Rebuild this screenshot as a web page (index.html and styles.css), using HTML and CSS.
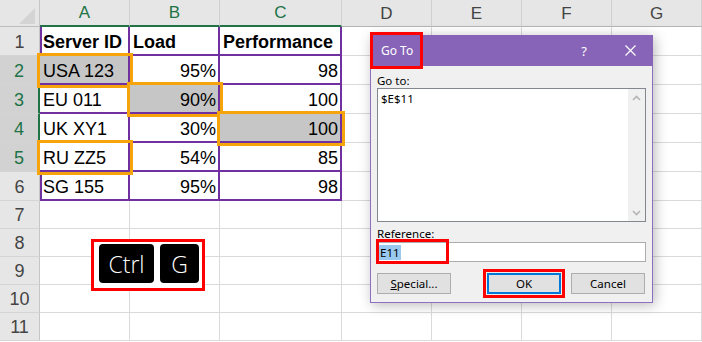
FILE: index.html
```html
<!DOCTYPE html>
<html lang="en">
  <head>
    <meta charset="UTF-8" />
    <meta name="viewport" content="width=device-width, initial-scale=1.0" />
    <title>Go To - Excel</title>
    <link rel="stylesheet" href="styles.css">
  </head>
  <body>
    <div class="sheet">
      <div class="corner">
        <svg width="40" height="27" viewBox="0 0 40 27"><polygon points="19,24 35,24 35,8" fill="#d4d4d4" /></svg>
      </div>
      <div class="col-head sel">A</div>
      <div class="col-head sel">B</div>
      <div class="col-head sel">C</div>
      <div class="col-head">D</div>
      <div class="col-head">E</div>
      <div class="col-head">F</div>
      <div class="col-head">G</div>

      <div class="row-head">1</div>
      <div class="c t first b">Server ID</div>
      <div class="c t b">Load</div>
      <div class="c t b">Performance</div>
      <div class="c"></div><div class="c"></div><div class="c"></div><div class="c"></div>

      <div class="row-head sel">2</div>
      <div class="c t hl pick">USA 123</div>
      <div class="c t num">95%</div>
      <div class="c t num">98</div>
      <div class="c"></div><div class="c"></div><div class="c"></div><div class="c"></div>

      <div class="row-head sel">3</div>
      <div class="c t">EU 011</div>
      <div class="c t num hl pick">90%</div>
      <div class="c t num">100</div>
      <div class="c"></div><div class="c"></div><div class="c"></div><div class="c"></div>

      <div class="row-head sel">4</div>
      <div class="c t">UK XY1</div>
      <div class="c t num">30%</div>
      <div class="c t num hl pick">100</div>
      <div class="c"></div><div class="c"></div><div class="c"></div><div class="c"></div>

      <div class="row-head sel">5</div>
      <div class="c t pick">RU ZZ5</div>
      <div class="c t num">54%</div>
      <div class="c t num">85</div>
      <div class="c"></div><div class="c"></div><div class="c"></div><div class="c"></div>

      <div class="row-head">6</div>
      <div class="c t first">SG 155</div>
      <div class="c t num">95%</div>
      <div class="c t num">98</div>
      <div class="c"></div><div class="c"></div><div class="c"></div><div class="c"></div>

      <div class="row-head">7</div>
      <div class="c"></div><div class="c"></div><div class="c"></div><div class="c"></div><div class="c"></div><div class="c"></div><div class="c"></div>
      <div class="row-head">8</div>
      <div class="c"></div><div class="c"></div><div class="c"></div><div class="c"></div><div class="c"></div><div class="c"></div><div class="c"></div>
      <div class="row-head">9</div>
      <div class="c"></div><div class="c"></div><div class="c"></div><div class="c"></div><div class="c"></div><div class="c"></div><div class="c"></div>
      <div class="row-head">10</div>
      <div class="c"></div><div class="c"></div><div class="c"></div><div class="c"></div><div class="c"></div><div class="c"></div><div class="c"></div>
      <div class="row-head">11</div>
      <div class="c"></div><div class="c"></div><div class="c"></div><div class="c"></div><div class="c"></div><div class="c"></div><div class="c"></div>

      <!-- keyboard shortcut callout -->
      <div class="keys">
        <span class="key wide">Ctrl</span>
        <span class="key">G</span>
      </div>

      <!-- Go To dialog -->
      <div class="dialog">
        <div class="title-bar">
          <span class="title">Go To</span>
          <span class="tb-btn">?</span>
          <span class="tb-btn">
            <svg width="11" height="11" viewBox="0 0 11 11"><path d="M0.5 0.5 L10.5 10.5 M10.5 0.5 L0.5 10.5" stroke="#fff" stroke-width="1.2" /></svg>
          </span>
        </div>
        <div class="dlg-body">
          <div class="label">Go to:</div>
          <div class="list">
            <div class="list-items">$E$11</div>
            <div class="scroll">
              <svg width="9" height="6" viewBox="0 0 9 6"><polyline points="1,5 4.5,1.5 8,5" fill="none" stroke="#b4b4b4" stroke-width="1.6" /></svg>
              <svg width="9" height="6" viewBox="0 0 9 6"><polyline points="1,1 4.5,4.5 8,1" fill="none" stroke="#b4b4b4" stroke-width="1.6" /></svg>
            </div>
          </div>
          <div class="label ref"><u>R</u>eference:</div>
          <div class="ref-input">
            <span class="sel-text">E11</span>
            <span class="mark"></span>
          </div>
          <div class="buttons">
            <button class="btn"><u>S</u>pecial...</button>
            <button class="btn ok">OK</button>
            <button class="btn">Cancel</button>
          </div>
        </div>
      </div>
    </div>
  </body>
</html>
```

FILE: styles.css
```css
* {
  box-sizing: border-box;
}
body {
  margin: 0;
  background: #fff;
  font-family: "Liberation Sans", Arial, sans-serif;
  overflow: hidden;
}
.sheet {
  position: relative;
  display: grid;
  grid-template-columns: 40px 90px 90px 122px 90px 90px 90px 90px;
  grid-template-rows: 27px repeat(6, 29px) repeat(5, 28px);
  width: 702px;
  height: 342px;
}
.corner {
  background: #e6e6e6;
  border-right: 1px solid #c6c6c6;
  border-bottom: 1px solid #bdbdbd;
}
.corner svg {
  display: block;
}
.col-head {
  background: #e6e6e6;
  color: #444;
  font-size: 17px;
  display: flex;
  align-items: center;
  justify-content: center;
  padding-top: 1px;
  border-right: 1px solid #d0d0d0;
  border-bottom: 1px solid #b4b4b4;
}
.col-head.sel {
  color: #217346;
  border-bottom: 2px solid #217346;
}
.row-head {
  background: #e6e6e6;
  color: #444;
  font-size: 18px;
  line-height: 20px;
  display: flex;
  align-items: flex-end;
  justify-content: center;
  padding-bottom: 3px;
  border-right: 1px solid #c6c6c6;
  border-bottom: 1px solid #d4d4d4;
}
.row-head.sel {
  background: #d2d2d2;
  color: #217346;
  border-right: 2px solid #217346;
}
.c {
  font-size: 18px;
  line-height: 20px;
  color: #000;
  display: flex;
  align-items: flex-end;
  padding: 0 2px 3px 3px;
  white-space: nowrap;
  border-right: 1px solid #dadada;
  border-bottom: 1px solid #dadada;
}
.c.t {
  border-right: 2px solid #7030a0;
  border-bottom: 2px solid #7030a0;
  padding-bottom: 2px;
}
.c.first {
  box-shadow: inset 2px 0 0 #7030a0;
}
.b {
  font-weight: bold;
}
.num {
  justify-content: flex-end;
}
.hl {
  background: #c6c6c6;
  background-clip: padding-box;
}
.pick {
  position: relative;
  z-index: 1;
  outline: 3px solid #f5a40c;
  outline-offset: 0;
}

/* Ctrl + G callout */
.keys {
  position: absolute;
  left: 91px;
  top: 239px;
  width: 114px;
  height: 52px;
  border: 3px solid #f00;
  background: #fff;
  display: flex;
  gap: 6px;
  padding: 2px 3px 5px 5px;
  z-index: 2;
}
.key {
  width: 39px;
  height: 39px;
  background: #000;
  border-radius: 4px;
  color: #fff;
  font-family: "Open Sans", sans-serif;
  font-weight: 300;
  font-size: 23px;
  display: flex;
  align-items: center;
  justify-content: center;
}
.key.wide {
  width: 55px;
}

/* dialog */
.dialog {
  position: absolute;
  left: 370px;
  top: 35px;
  width: 283px;
  height: 268px;
  background: #f0f0f0;
  border: 1px solid #8d6fc2;
  box-shadow: 2px 2px 12px rgba(0, 0, 0, 0.28);
  font-family: "Noto Sans", "Open Sans", sans-serif;
  font-size: 11.5px;
  color: #000;
  z-index: 3;
}
.title-bar {
  height: 31px;
  background: #8764b8;
  color: #fff;
  display: flex;
  align-items: center;
  margin: -1px -1px 0 -1px;
}
.title {
  position: relative;
  height: 37px;
  width: 53px;
  margin: -3px 0;
  border: 3px solid #f00;
  padding-left: 8px;
  font-size: 12px;
  display: flex;
  align-items: center;
}
.tb-btn {
  width: 46px;
  height: 31px;
  display: flex;
  align-items: center;
  justify-content: center;
  font-size: 13px;
}
.tb-btn:nth-child(2) {
  margin-left: auto;
}
.dlg-body {
  padding: 0 6px;
}
.label {
  margin-top: 7px;
  line-height: 15px;
  height: 15px;
}
.label.ref {
  margin-top: 4px;
  margin-bottom: 1px;
}
.list {
  height: 134px;
  border: 1px solid #828790;
  background: #fff;
  display: flex;
}
.list-items {
  flex: 1;
  padding: 3px 3px;
  line-height: 14px;
}
.scroll {
  width: 17px;
  background: #f0f0f0;
  display: flex;
  flex-direction: column;
  align-items: center;
  justify-content: space-between;
  padding: 6px 0 5px;
}
.scroll svg {
  display: block;
}
.ref-input {
  position: relative;
  height: 20px;
  border: 1px solid #acacac;
  background: #fff;
  padding: 1px 1px;
  display: flex;
  align-items: center;
}
.sel-text {
  background: #99c9ef;
  line-height: 15px;
  padding: 0 1px;
}
.mark {
  position: absolute;
  left: -2px;
  top: -4px;
  width: 73px;
  height: 25px;
  border: 3px solid #f00;
}
.buttons {
  display: flex;
  gap: 10px;
  margin-top: 11px;
  padding-right: 1px;
}
.btn {
  width: 74px;
  height: 21px;
  background: #e1e1e1;
  border: 1px solid #adadad;
  font-family: "Noto Sans", "Open Sans", sans-serif;
  font-size: 11.5px;
  color: #000;
  padding: 0;
}
.btn.ok {
  margin-left: auto;
  border: 2px solid #0078d7;
  outline: 3px solid #f00;
  outline-offset: 1px;
}
```
